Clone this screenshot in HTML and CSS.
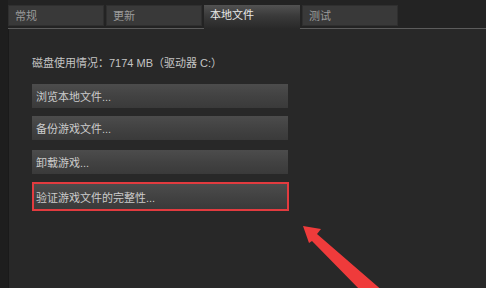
FILE: index.html
```html
<!DOCTYPE html>
<html lang="zh-CN">
<head>
    <meta charset="UTF-8">
    <title>本地文件</title>
    <link rel="stylesheet" href="styles.css">
</head>
<body>
    <div class="window">
        <div class="tabs">
            <div class="tab">常规</div>
            <div class="tab">更新</div>
            <div class="tab active">本地文件</div>
            <div class="tab">测试</div>
        </div>

        <div class="panel">
            <div class="disk-usage">磁盘使用情况：7174 MB（驱动器 C:）</div>

            <div class="actions">
                <button class="action">浏览本地文件...</button>
                <button class="action">备份游戏文件...</button>
                <button class="action spaced">卸载游戏...</button>
                <button class="action highlight">验证游戏文件的完整性...</button>
            </div>
        </div>
    </div>

    <!-- annotation arrow pointing at the verify button -->
    <svg class="arrow" width="486" height="288" viewBox="0 0 486 288">
        <polygon points="303,226 321,229 317,234 384,292 362,292 312,241 309,243" fill="#ef3b3b"/>
    </svg>
</body>
</html>
```

FILE: styles.css
```css
body {
    margin: 0;
    background: #1e1e1e;
    font-family: 'Liberation Sans', 'Noto Sans CJK SC', sans-serif;
    font-size: 11px;
    width: 486px;
    height: 288px;
    overflow: hidden;
    position: relative;
}

.window {
    padding-left: 8px;
    height: 288px;
    display: flex;
    flex-direction: column;
}

.tabs {
    display: flex;
    align-items: flex-start;
    gap: 2px;
    padding-top: 5px;
    height: 23px;
    border-bottom: 1px solid #5c5c5c;
    background: #232323;
}

.tab {
    box-sizing: border-box;
    width: 96px;
    height: 21px;
    padding-left: 6px;
    line-height: 20px;
    color: #9c9c9c;
    background: #393939;
    border: 1px solid #2f2f2f;
}

.tab.active {
    height: 24px;
    color: #e8e8e8;
    border: none;
    padding-left: 6px;
    line-height: 21px;
    background: linear-gradient(180deg, #525252 0%, #3a3a3a 45%, #282828 100%);
}

.panel {
    flex: 1;
    background: #282828;
    border-left: 1px solid #1a1a1a;
    padding: 27px 0 0 23px;
}

.disk-usage {
    color: #c4c4c4;
    line-height: 14px;
}

.actions {
    display: flex;
    flex-direction: column;
    gap: 8px;
    margin-top: 14px;
    width: 256px;
}

.action {
    box-sizing: border-box;
    height: 24px;
    padding: 0 0 0 4px;
    text-align: left;
    font-family: inherit;
    font-size: 11px;
    color: #cccccc;
    border: none;
    background: linear-gradient(180deg, #4c4c4c 0%, #424242 50%, #3a3a3a 100%);
}

.action.spaced {
    margin-top: 2px;
}

.action.highlight {
    height: 29px;
    width: 257px;
    padding-left: 2px;
    border: 2px solid #e23b3f;
}

.arrow {
    position: absolute;
    left: 0;
    top: 0;
    pointer-events: none;
}
```
